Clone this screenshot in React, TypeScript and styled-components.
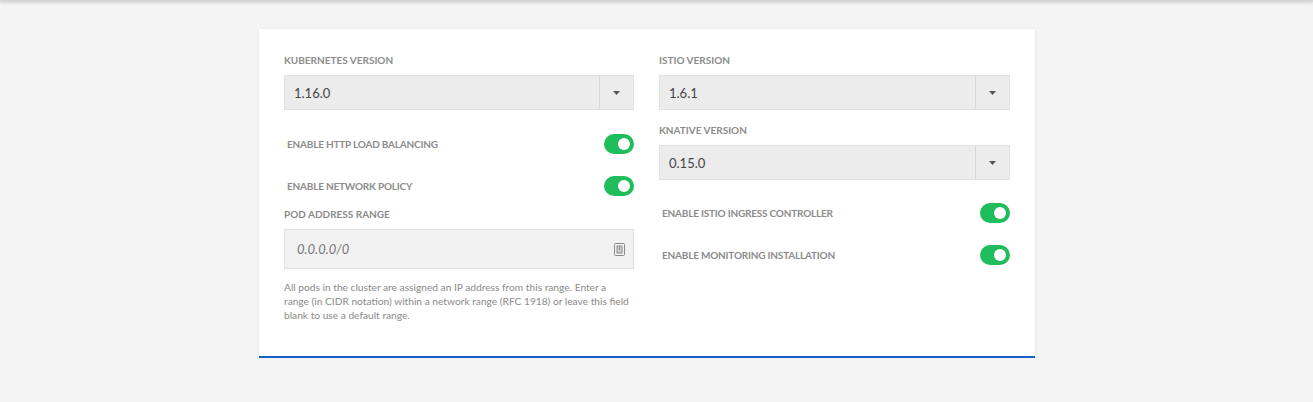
import styled, { createGlobalStyle } from "styled-components";

const GlobalStyle = createGlobalStyle`
  body {
    margin: 0;
    background: #f4f4f4;
    font-family: Lato, "Open Sans", sans-serif;
  }
`;

function Caret() {
    return (
        <svg width="7" height="4" viewBox="0 0 7 4">
            <path d="M0 0h7L3.5 4z" fill="#555" />
        </svg>
    );
}

function FieldIcon() {
    return (
        <svg width="11" height="13" viewBox="0 0 11 13">
            <rect x="0.5" y="0.5" width="10" height="12" rx="1" fill="none" stroke="#8a8a8a" />
            <rect x="3" y="3" width="5" height="7" fill="#cfcfcf" stroke="#8a8a8a" />
            <path d="M5.5 4v3" stroke="#8a8a8a" />
        </svg>
    );
}

function Select({ value }: { value: string }) {
    return (
        <SelectBox>
            <SelectValue>{value}</SelectValue>
            <CaretCell>
                <Caret />
            </CaretCell>
        </SelectBox>
    );
}

function ToggleRow({ label, top }: { label: string; top?: number }) {
    return (
        <Row $top={top}>
            <RowLabel>{label}</RowLabel>
            <Toggle>
                <Knob />
            </Toggle>
        </Row>
    );
}

function App() {
    return (
        <>
            <GlobalStyle />
            <TopBar />
            <Page>
                <Card>
                    <Column>
                        <Label>Kubernetes Version</Label>
                        <Select value="1.16.0" />
                        <ToggleRow label="Enable HTTP load balancing" top={24} />
                        <ToggleRow label="Enable network policy" top={22} />
                        <Label $top={12}>Pod address range</Label>
                        <InputBox>
                            <Placeholder>0.0.0.0/0</Placeholder>
                            <FieldIcon />
                        </InputBox>
                        <Help>
                            All pods in the cluster are assigned an IP address from this range. Enter a
                            <br />
                            range (in CIDR notation) within a network range (RFC 1918) or leave this field
                            <br />
                            blank to use a default range.
                        </Help>
                    </Column>
                    <Column>
                        <Label>Istio Version</Label>
                        <Select value="1.6.1" />
                        <Label $top={14}>Knative Version</Label>
                        <Select value="0.15.0" />
                        <ToggleRow label="Enable Istio ingress controller" top={23} />
                        <ToggleRow label="Enable monitoring installation" top={22} />
                    </Column>
                </Card>
            </Page>
        </>
    );
}

const TopBar = styled.div`
  height: 2px;
  background: #d6d6d6;
  box-shadow: 0 1px 3px rgba(0, 0, 0, 0.15);
`;

const Page = styled.div`
  display: flex;
  justify-content: center;
  padding: 27px 19px 0 0;
`;

const Card = styled.div`
  width: 776px;
  box-sizing: border-box;
  background: #fff;
  padding: 25px 25px 34px 25px;
  border-bottom: 2px solid #1a5fc4;
  box-shadow: 0 1px 3px rgba(0, 0, 0, 0.08);
  display: grid;
  grid-template-columns: 350px 351px;
  column-gap: 25px;
  align-items: start;
`;

const Column = styled.div`
  display: flex;
  flex-direction: column;
`;

const Label = styled.div<{ $top?: number }>`
  margin-top: ${(p) => p.$top ?? 0}px;
  margin-bottom: 8px;
  font-size: 10px;
  line-height: 13px;
  font-weight: 700;
  text-transform: uppercase;
  color: #8c8c8c;
`;

const SelectBox = styled.div`
  height: 35px;
  box-sizing: border-box;
  display: flex;
  background: #ececec;
  border: 1px solid #e2e2e2;
`;

const SelectValue = styled.div`
  flex: 1;
  display: flex;
  align-items: center;
  padding-left: 9px;
  font-size: 13px;
  color: #444;
`;

const CaretCell = styled.div`
  width: 33px;
  display: flex;
  align-items: center;
  justify-content: center;
  border-left: 1px solid #d8d8d8;
`;

const Row = styled.div<{ $top?: number }>`
  margin-top: ${(p) => p.$top ?? 0}px;
  display: flex;
  align-items: center;
  justify-content: space-between;
  padding-left: 3px;
  height: 20px;
`;

const RowLabel = styled.div`
  font-size: 10px;
  font-weight: 700;
  letter-spacing: -0.2px;
  text-transform: uppercase;
  color: #8c8c8c;
`;

const Toggle = styled.div`
  width: 30px;
  height: 20px;
  border-radius: 10px;
  background: #1fbd5c;
  display: flex;
  align-items: center;
  justify-content: flex-end;
  padding-right: 4px;
  box-sizing: border-box;
`;

const Knob = styled.div`
  width: 12px;
  height: 12px;
  border-radius: 50%;
  background: #fff;
`;

const InputBox = styled.div`
  height: 40px;
  box-sizing: border-box;
  background: #f2f2f2;
  border: 1px solid #e0e0e0;
  display: flex;
  align-items: center;
  justify-content: space-between;
  padding: 0 8px 0 12px;
`;

const Placeholder = styled.span`
  font-size: 13px;
  font-style: italic;
  color: #777;
`;

const Help = styled.p`
  margin: 11px 0 0 0;
  font-size: 10.2px;
  line-height: 14px;
  color: #8a8a8a;
`;

export default App;
